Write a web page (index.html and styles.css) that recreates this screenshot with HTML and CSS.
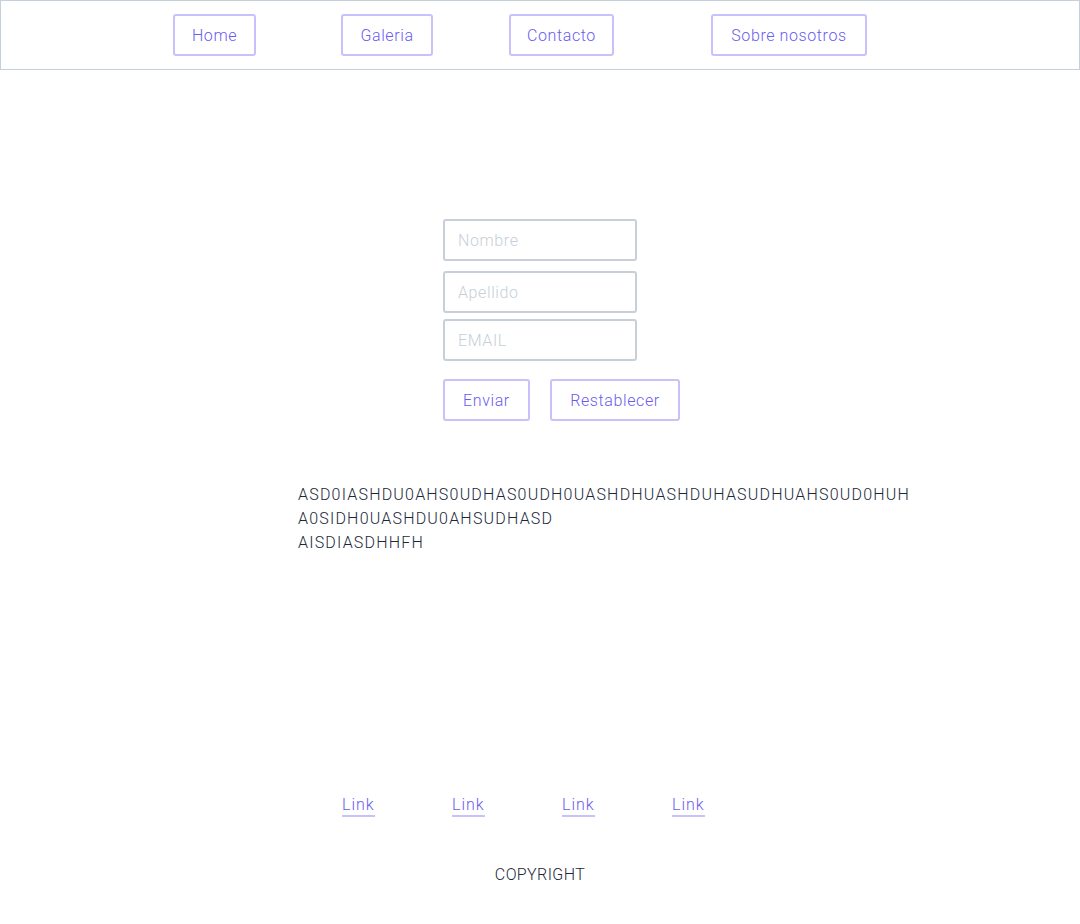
FILE: index.html
```html
<!DOCTYPE html>
<html lang="es">
<head>
<meta charset="utf-8">
<title>Página</title>
<link rel="stylesheet" href="styles.css">
</head>
<body>
<nav class="nav">
  <a class="nav-btn nav-home" href="#">Home</a>
  <a class="nav-btn nav-galeria" href="#">Galeria</a>
  <a class="nav-btn nav-contacto" href="#">Contacto</a>
  <a class="nav-btn nav-sobre" href="#">Sobre nosotros</a>
</nav>
<main class="main">
  <form class="form">
    <input class="field field-nombre" type="text" placeholder="Nombre">
    <input class="field field-apellido" type="text" placeholder="Apellido">
    <input class="field field-email" type="email" placeholder="EMAIL">
    <div class="actions">
      <button class="btn" type="submit">Enviar</button>
      <button class="btn" type="reset">Restablecer</button>
    </div>
  </form>
  <p class="text">ASD0IASHDU0AHS0UDHAS0UDH0UASHDHUASHDUHASUDHUAHS0UD0HUH<br>A0SIDH0UASHDU0AHSUDHASD<br>AISDIASDHHFH</p>
</main>
<footer class="footer">
  <div class="links">
    <a class="link" href="#">Link</a>
    <a class="link" href="#">Link</a>
    <a class="link" href="#">Link</a>
    <a class="link" href="#">Link</a>
  </div>
  <p class="copyright">COPYRIGHT</p>
</footer>
</body>
</html>
```
FILE: styles.css
```css
* { box-sizing: border-box; }
html, body { margin: 0; padding: 0; background: #fff; }
body {
  font-family: Roboto, "Liberation Sans", sans-serif;
  font-weight: 300;
  font-size: 16px;
  letter-spacing: 0.6px;
  color: #1c2838;
}
.nav {
  display: flex;
  align-items: center;
  height: 70px;
  width: 1080px;
  border: 1px solid #c6d0da;
  padding: 0 0 0 172px;
}
.nav-btn {
  display: inline-flex;
  align-items: center;
  justify-content: center;
  height: 42px;
  border: 2px solid #c7c2fb;
  border-radius: 3px;
  color: #6a5cf0;
  text-decoration: none;
  padding: 0 17px;
}
.nav-home { width: 83px; }
.nav-galeria { width: 92px; margin-left: 85px; }
.nav-contacto { width: 105px; margin-left: 76px; }
.nav-sobre { width: 156px; margin-left: 97px; }

.main { padding-top: 149px; }
.form {
  display: flex;
  flex-direction: column;
  margin-left: 443px;
  width: 240px;
}
.field {
  width: 194px;
  height: 42px;
  border: 2px solid #c7d0d9;
  border-radius: 3px;
  padding: 0 13px;
  font: inherit;
  letter-spacing: inherit;
  color: #1c2838;
  background: #fff;
  outline: none;
}
.field::placeholder { color: #c7cfd8; }
.field-apellido { margin-top: 10px; }
.field-email { margin-top: 6px; }
.actions {
  display: flex;
  gap: 20px;
  margin-top: 18px;
}
.btn {
  height: 42px;
  border: 2px solid #c7c2fb;
  border-radius: 3px;
  background: #fff;
  color: #6a5cf0;
  font: inherit;
  letter-spacing: inherit;
  padding: 0 17px;
}
.btn:first-child { width: 87px; }
.btn:last-child { width: 130px; }

.text {
  margin: 62px 0 0 298px;
  line-height: 24px;
  letter-spacing: 1.2px;
  color: #1c2838;
}

.footer { padding-top: 240px; }
.links {
  display: grid;
  grid-template-columns: repeat(4, 110px);
  margin-left: 342px;
}
.link {
  justify-self: start;
  color: #6a5cf0;
  text-decoration: none;
  line-height: 20px;
  letter-spacing: 1px;
  border-bottom: 2px solid #c7c2fb;
}
.copyright {
  margin: 46px 0 0;
  text-align: center;
  line-height: 24px;
  letter-spacing: 0.4px;
  color: #1c2838;
}
```
